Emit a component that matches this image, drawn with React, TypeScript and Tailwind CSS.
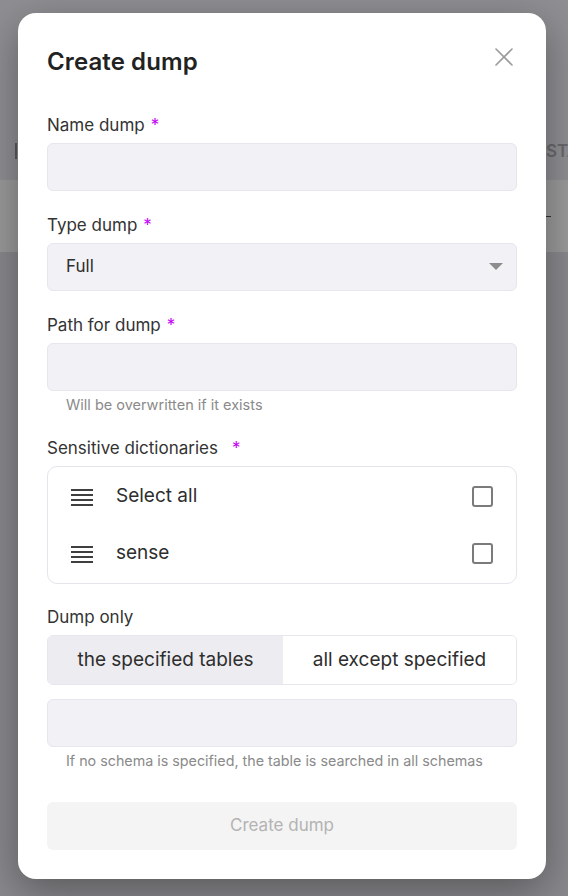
import React from "react";

const font = { fontFamily: "Inter, 'Noto Sans', sans-serif" };

function Star() {
  return <span className="text-[#c400f5] ml-[6px]">*</span>;
}

function Label({ children, star = true, gap = false }: { children: React.ReactNode; star?: boolean; gap?: boolean }) {
  return (
    <div className="h-6 leading-6 text-[17px] text-[#333333]">
      {children}
      {star && (gap ? <span className="ml-[8px]"><Star /></span> : <Star />)}
    </div>
  );
}

function Input() {
  return <div className="h-12 rounded-[6px] bg-[#f2f1f6] border border-[#e7e6ec]" />;
}

function Hamburger() {
  return (
    <svg width="24" height="18" viewBox="0 0 24 18" className="shrink-0">
      <g stroke="#2a2a2a" strokeWidth="1.8">
        <line x1="1" y1="2" x2="23" y2="2" />
        <line x1="1" y1="7" x2="23" y2="7" />
        <line x1="1" y1="12" x2="23" y2="12" />
        <line x1="1" y1="17" x2="23" y2="17" />
      </g>
    </svg>
  );
}

function Row({ text }: { text: string }) {
  return (
    <div className="h-[57px] flex items-center pl-[22px] pr-[23px]">
      <Hamburger />
      <span className="ml-[22px] text-[19px] text-[#2e2e2e] flex-1">{text}</span>
      <div className="w-[21px] h-[21px] rounded-[3px] border-2 border-[#7b7b7b]" />
    </div>
  );
}

export default function App() {
  return (
    <div className="relative h-[896px] w-[568px] overflow-hidden" style={font}>
      <div className="h-[180px] bg-[#8f8f93] relative">
        <div className="absolute left-[15px] top-[143px] w-[2px] h-[16px] bg-[#5a5a5d]" />
        <div className="absolute left-[546px] top-[139px] w-[22px] overflow-hidden whitespace-nowrap text-[17px] font-semibold text-[#69696c]">STA</div>
      </div>
      <div className="h-[72px] bg-[#9a9a9b] relative">
        <div className="absolute left-[546px] top-[36px] w-[5px] h-[1px] bg-[#333]" />
      </div>
      <div className="h-[644px] bg-[#89898d]" />

      <div className="absolute left-[18px] top-[13px] w-[528px] h-[866px] bg-white rounded-[18px] shadow-[0_12px_40px_rgba(0,0,0,0.35)] px-[29px] pt-[30px]">
        <div className="flex items-center justify-between h-[38px]">
          <div className="text-[24px] font-semibold text-[#222] tracking-[0.1px]">Create dump</div>
          <svg width="20" height="20" viewBox="0 0 20 20" className="mr-[3px] -mt-[10px]">
            <g stroke="#9a9a9a" strokeWidth="1.6" strokeLinecap="round">
              <line x1="2" y1="2" x2="18" y2="18" />
              <line x1="18" y1="2" x2="2" y2="18" />
            </g>
          </svg>
        </div>

        <div className="mt-[32px]">
          <Label>Name dump</Label>
          <div className="mt-[6px]"><Input /></div>
        </div>

        <div className="mt-[22px]">
          <Label>Type dump</Label>
          <div className="mt-[6px] h-12 rounded-[6px] bg-[#f2f1f6] border border-[#e7e6ec] flex items-center pl-[18px] pr-[13px]">
            <span className="flex-1 text-[17px] text-[#2e2e2e]">Full</span>
            <svg width="14" height="8" viewBox="0 0 14 8"><path d="M0 0 L14 0 L7 7 Z" fill="#8c8c8c" /></svg>
          </div>
        </div>

        <div className="mt-[22px]">
          <Label>Path for dump</Label>
          <div className="mt-[6px]"><Input /></div>
          <div className="mt-[4px] h-5 leading-5 pl-[19px] text-[14.5px] text-[#8a8a8a]">Will be overwritten if it exists</div>
        </div>

        <div className="mt-[21px]">
          <Label gap>Sensitive dictionaries</Label>
          <div className="mt-[6px] rounded-[10px] border border-[#e5e4ea] py-[1px]">
            <Row text="Select all" />
            <Row text="sense" />
          </div>
        </div>

        <div className="mt-[21px]">
          <Label star={false}>Dump only</Label>
          <div className="mt-[6px] h-[50px] rounded-[6px] border border-[#e7e6ec] flex overflow-hidden text-[19px] text-[#2e2e2e]">
            <div className="w-[235px] bg-[#edecf1] flex items-center justify-center">the specified tables</div>
            <div className="flex-1 bg-white flex items-center justify-center">all except specified</div>
          </div>
          <div className="mt-[14px]"><Input /></div>
          <div className="mt-[4px] h-5 leading-5 pl-[19px] text-[14.3px] text-[#8a8a8a]">If no schema is specified, the table is searched in all schemas</div>
        </div>

        <div className="mt-[31px] h-12 rounded-[6px] bg-[#f4f4f4] flex items-center justify-center text-[17px] text-[#b3b3b3]">
          Create dump
        </div>
      </div>
    </div>
  );
}
